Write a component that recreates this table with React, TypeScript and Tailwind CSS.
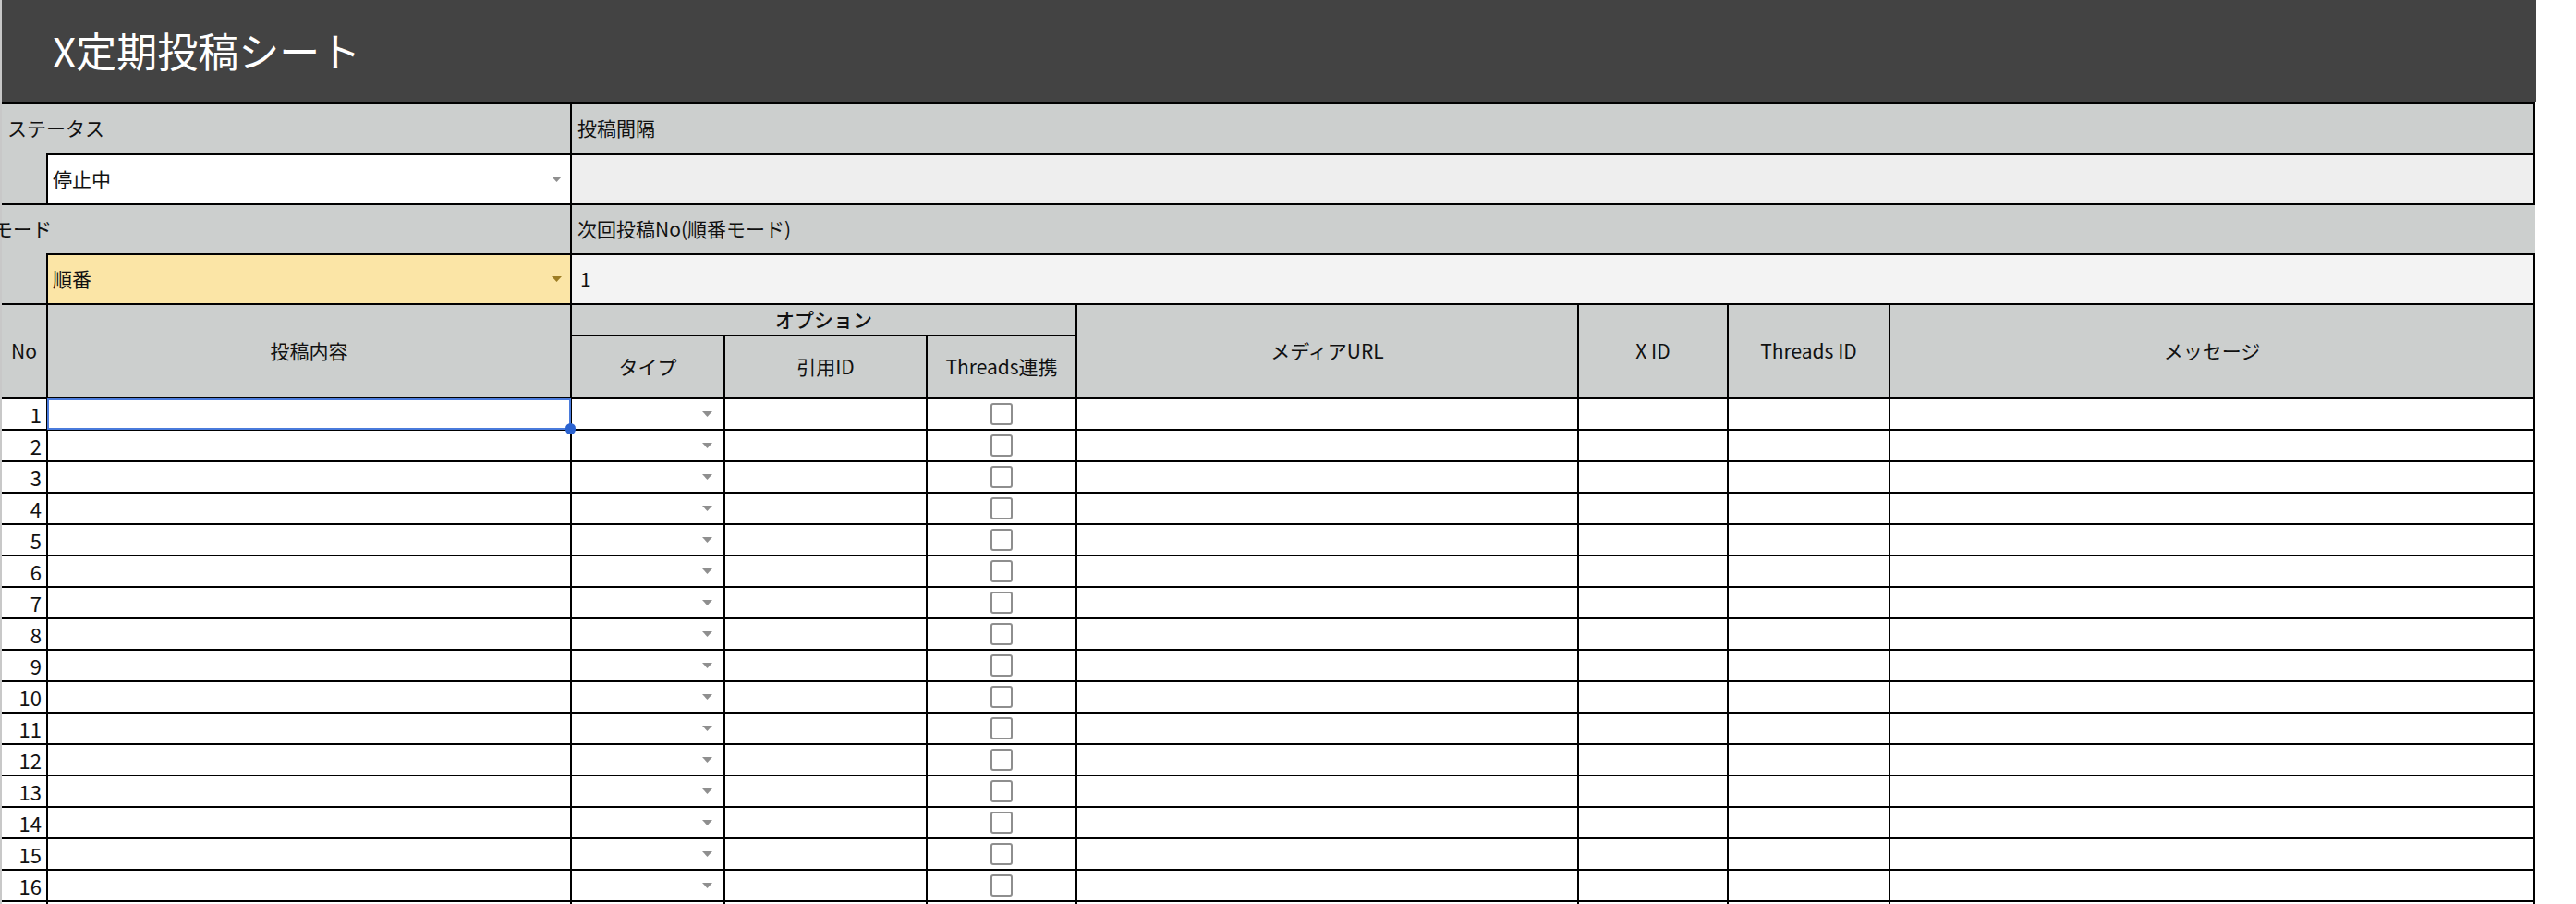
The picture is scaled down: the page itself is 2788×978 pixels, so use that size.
import React from "react";

const FONT = "font-['Noto_Sans_CJK_JP','Noto_Sans',sans-serif]";

const COLS = "grid-cols-[48px_565px_164px_217px_160px_541px_160px_173px_696px]";

function Arrow({ fill }: { fill: string }) {
  return (
    <svg width="11" height="6" viewBox="0 0 11 6" className={fill}>
      <path d="M0 0h11L5.5 6z" />
    </svg>
  );
}

function Checkbox() {
  return <div className="h-[24px] w-[24px] rounded-[3px] border-2 border-[#8e8e8e] bg-white" />;
}

function TopBlock({
  label,
  labelIndent,
  value,
  valueBg,
  arrowFill,
  rightLabel,
  rightValue,
  rightValueBg,
  rightLabelBorder,
  labelH,
}: {
  label: string;
  labelIndent: string;
  value: string;
  valueBg: string;
  arrowFill: string;
  rightLabel: string;
  rightValue: string;
  rightValueBg: string;
  rightLabelBorder: boolean;
  labelH: string;
}) {
  return (
    <div className="flex border-b-2 border-black bg-[#cccfce]">
      <div className="flex w-[615px] flex-col">
        <div className={`flex items-center ${labelH}`}>
          <span className={`whitespace-nowrap ${labelIndent}`}>{label}</span>
        </div>
        <div className="flex h-[54px]">
          <div className="w-[48px]" />
          <div className={`flex flex-1 items-center justify-between border-l-2 border-t-2 border-black pl-[5px] pr-[9px] ${valueBg}`}>
            <span>{value}</span>
            <Arrow fill={arrowFill} />
          </div>
        </div>
      </div>
      <div className="flex flex-1 flex-col border-l-2 border-black">
        <div
          className={`flex items-center pl-[6px] ${labelH} ${
            rightLabelBorder ? "border-r-2 border-black" : ""
          }`}
        >
          {rightLabel}
        </div>
        <div className={`flex h-[54px] items-center border-r-2 border-t-2 border-black pl-[9px] ${rightValueBg}`}>
          {rightValue}
        </div>
      </div>
    </div>
  );
}

export default function App() {
  const rows = Array.from({ length: 17 }, (_, i) => i + 1);

  return (
    <div className={`flex h-[978px] w-[2788px] overflow-hidden bg-white text-[21px] text-[#111] ${FONT}`}>
      <div className="w-[2px] shrink-0 bg-[#c8c8c8]" />
      <div className="w-[2742px] shrink-0">
        {/* title bar */}
        <div className="flex h-[110px] w-[2743px] items-center bg-[#434343] pb-[2px] pl-[55px]">
          <h1 className="text-[44px] leading-none font-normal text-white">X定期投稿シート</h1>
        </div>

        <div className="border-t-2 border-black">
          <TopBlock
            label="ステータス"
            labelIndent="pl-[6px]"
            value="停止中"
            valueBg="bg-white"
            arrowFill="fill-[#8f8f8f]"
            rightLabel="投稿間隔"
            rightValue=""
            rightValueBg="bg-[#eeeeee]"
            rightLabelBorder
            labelH="h-[54px]"
          />
          <TopBlock
            label="モード"
            labelIndent="-ml-[9px]"
            value="順番"
            valueBg="bg-[#fbe5a6]"
            arrowFill="fill-[#9d7d24]"
            rightLabel="次回投稿No(順番モード)"
            rightValue="1"
            rightValueBg="bg-[#f3f3f3]"
            rightLabelBorder={false}
            labelH="h-[52px]"
          />
        </div>

        {/* post table */}
        <div
          className={`grid ${COLS} grid-rows-[32px_66px] auto-rows-[32px] gap-[2px] bg-black pr-[2px]`}
        >
          <div className="row-span-2 flex items-center justify-center bg-[#cccfce]">No</div>
          <div className="row-span-2 flex items-center justify-center bg-[#cccfce]">投稿内容</div>
          <div className="col-span-3 flex items-center justify-center bg-[#cccfce] font-medium">オプション</div>
          <div className="row-span-2 flex items-center justify-center bg-[#cccfce]">メディアURL</div>
          <div className="row-span-2 flex items-center justify-center bg-[#cccfce]">X ID</div>
          <div className="row-span-2 flex items-center justify-center bg-[#cccfce]">Threads ID</div>
          <div className="row-span-2 flex items-center justify-center bg-[#cccfce]">メッセージ</div>
          <div className="flex items-center justify-center bg-[#cccfce]">タイプ</div>
          <div className="flex items-center justify-center bg-[#cccfce]">引用ID</div>
          <div className="flex items-center justify-center bg-[#cccfce]">Threads連携</div>

          {rows.map((n) => (
            <React.Fragment key={n}>
              <div className="flex items-center justify-end bg-white pr-[5px] text-[22px] leading-none">{n}</div>
              <div className="relative bg-white">
                {n === 1 && (
                  <div className="absolute -inset-[1px] z-10 border-2 border-[#4a7bdc]">
                    <div className="absolute -bottom-[7px] -right-[7px] h-[12px] w-[11px] rounded-full bg-[#2a62d0]" />
                  </div>
                )}
              </div>
              <div className="flex items-center justify-end bg-white pr-[12px]">
                <Arrow fill="fill-[#8f8f8f]" />
              </div>
              <div className="bg-white" />
              <div className="flex items-center justify-center bg-white">
                <Checkbox />
              </div>
              <div className="bg-white" />
              <div className="bg-white" />
              <div className="bg-white" />
              <div className="bg-white" />
            </React.Fragment>
          ))}
        </div>
      </div>
    </div>
  );
}
